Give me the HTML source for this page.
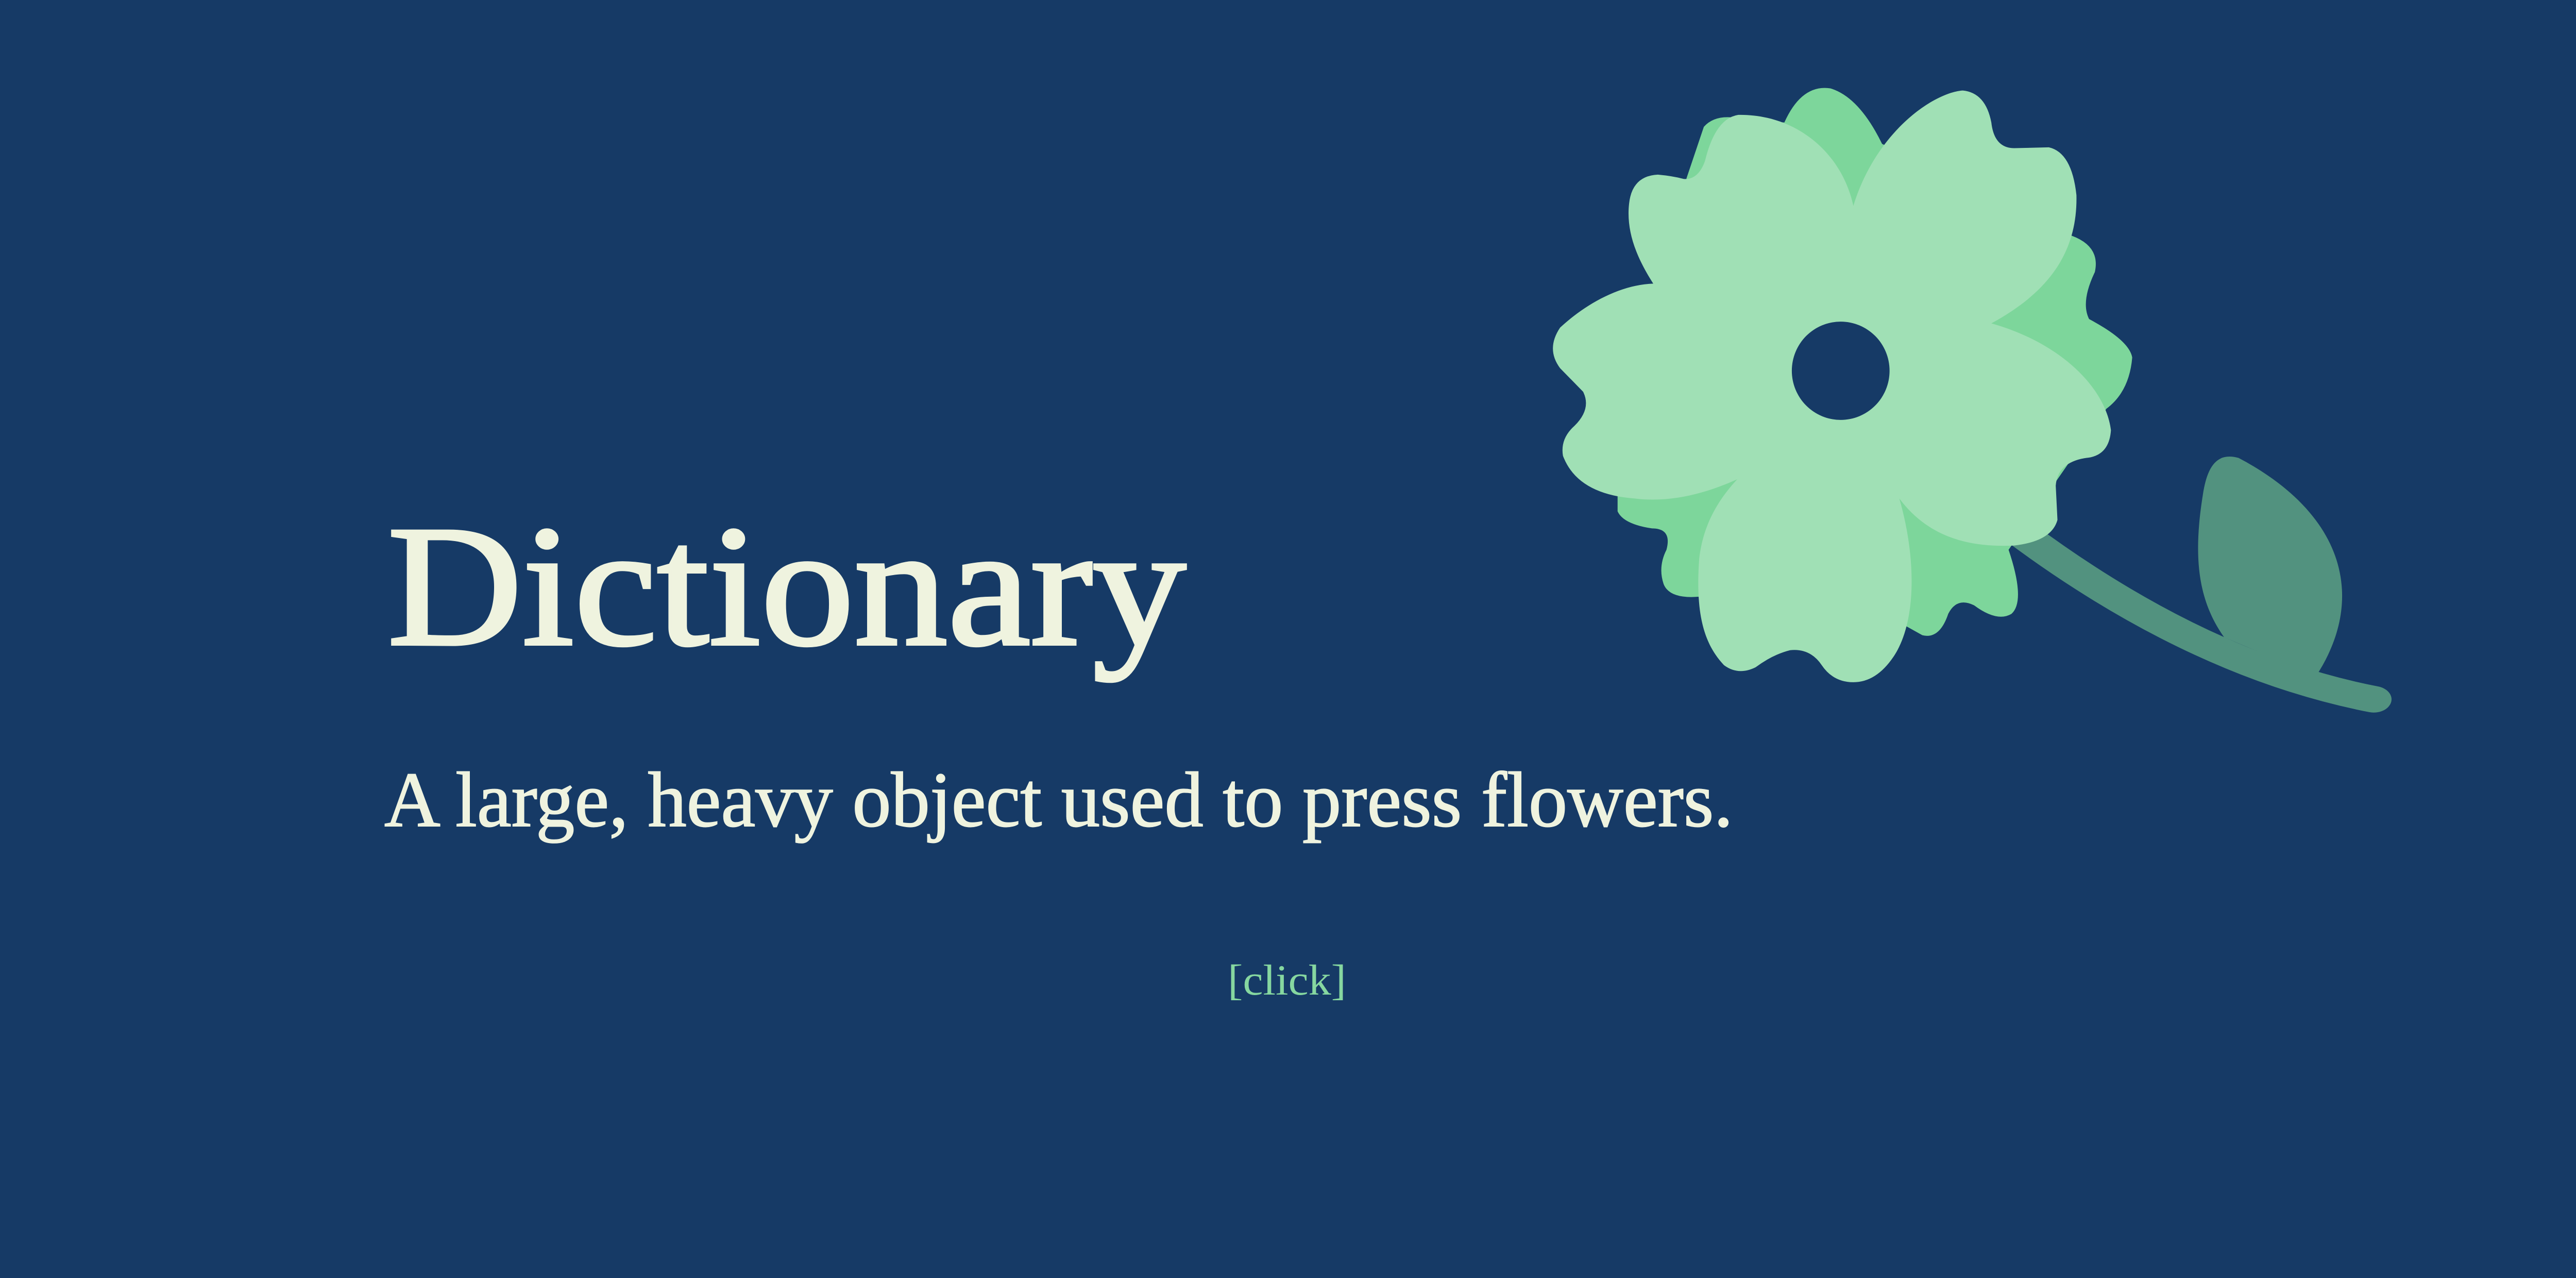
<!DOCTYPE html>
<html><head><style>
html,body{margin:0;padding:0;background:#163a66;}
svg{display:block}
</style></head><body>
<svg width="5008" height="2480" viewBox="0 0 5008 2480" xmlns="http://www.w3.org/2000/svg">
<rect width="5008" height="2480" fill="#163a66"/>
<text x="752" y="1250" font-family="Liberation Serif, serif" font-size="335" fill="#eff3df" stroke="#eff3df" stroke-width="6" textLength="1550" lengthAdjust="spacingAndGlyphs">Dictionary</text>
<text x="746" y="1603" font-family="Liberation Serif, serif" font-size="152" fill="#eff3df" stroke="#eff3df" stroke-width="2" textLength="2618" lengthAdjust="spacingAndGlyphs">A large, heavy object used to press flowers.</text>
<text x="2383" y="1930" font-family="Liberation Serif, serif" font-size="84" fill="#86d7a0" textLength="230" lengthAdjust="spacingAndGlyphs">[click]</text>
<svg x="2950" y="130" width="1750" height="1300" viewBox="0 0 1568 1568" preserveAspectRatio="none">
<path d="M 870 1090 Q 1180 1400 1485 1480" fill="none" stroke="#52927f" stroke-width="62" stroke-linecap="round"/>
<path d="M 1385 1425 C 1470 1250 1440 1050 1250 915 C 1210 900 1195 940 1188 1000 C 1170 1150 1180 1250 1225 1335 Z" fill="#52927f"/>
<path d="M 290 260 L 320 140 Q 340 110 380 120 L 460 130 Q 490 40 540 50 Q 590 70 630 180 L 960 395 Q 1010 420 1000 480 Q 975 550 990 590 Q 1060 640 1065 680 Q 1060 760 1020 800 L 850 1130 Q 880 1250 855 1280 Q 830 1300 790 1260 Q 760 1240 745 1280 Q 730 1340 700 1330 L 660 1300 L 310 1240 Q 260 1245 250 1210 Q 240 1170 255 1130 Q 265 1080 230 1080 Q 180 1070 170 1040 L 170 1000 Z" fill="#7dd69b"/>
<path d="M 580 325 C 620 150 720 60 770 55 Q 810 60 820 130 Q 825 190 860 190 L 920 188 Q 960 200 968 300 C 970 420 930 520 820 600 C 950 650 1020 760 1028 850 Q 1025 910 985 915 Q 935 925 932 980 L 935 1060 Q 925 1110 860 1120 C 780 1125 710 1100 660 1010 C 690 1150 690 1300 650 1380 Q 620 1440 580 1440 Q 545 1440 525 1400 Q 505 1360 470 1365 Q 440 1375 410 1405 Q 380 1425 355 1400 C 320 1350 305 1280 312 1150 C 318 1080 340 1020 378 965 C 320 1000 260 1020 200 1010 Q 100 1000 75 910 Q 70 870 95 840 Q 125 800 110 760 L 70 705 Q 45 660 70 610 C 110 560 170 510 232 507 C 200 440 185 380 190 320 Q 195 255 240 252 Q 265 255 285 262 Q 310 265 322 220 Q 340 120 380 112 C 480 110 560 200 580 325 Z" fill="#a0e0b5"/>
<ellipse cx="558" cy="711" rx="85" ry="115" fill="#163a66"/>
</svg>
</svg>
</body></html>
